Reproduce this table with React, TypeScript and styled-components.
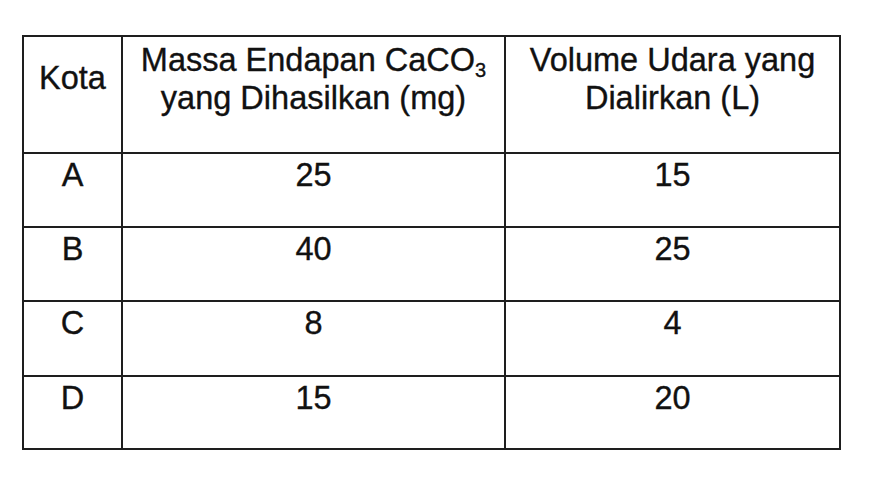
import React from "react";
import styled, { createGlobalStyle } from "styled-components";

const Global = createGlobalStyle`
  html, body { margin: 0; padding: 0; background: #ffffff; }
  body { font-family: "Liberation Sans", Arial, sans-serif; color: #111111; }
`;

const Page = styled.div`
  padding: 35px 0 0 22px;
`;

const Table = styled.table`
  border-collapse: collapse;
  table-layout: fixed;
  width: 819px;
  font-size: 32.5px;
  line-height: 38px;
  -webkit-text-stroke: 0.35px #111111;
`;

const Cell = styled.td<{ $h: number; $pad?: number }>`
  border: 2px solid #1e1e1e;
  height: ${(p) => p.$h}px;
  padding: ${(p) => p.$pad ?? 2}px 4px 0;
  vertical-align: top;
  text-align: center;
  box-sizing: border-box;
`;

const Sub = styled.sub`
  font-size: 20px;
  vertical-align: -6px;
  line-height: 0;
`;

const rows: [string, string, string, number][] = [
  ["A", "25", "15", 74],
  ["B", "40", "25", 74],
  ["C", "8", "4", 75],
  ["D", "15", "20", 73],
];

export default function App() {
  return (
    <>
      <Global />
      <Page>
        <Table>
          <colgroup>
            <col style={{ width: 99 }} />
            <col style={{ width: 383 }} />
            <col style={{ width: 335 }} />
          </colgroup>
          <tbody>
            <tr>
              <Cell $h={117} $pad={22}>Kota</Cell>
              <Cell $h={117} $pad={4}>
                Massa Endapan CaCO<Sub>3</Sub>
                <br />
                yang Dihasilkan (mg)
              </Cell>
              <Cell $h={117} $pad={4}>
                Volume Udara yang
                <br />
                Dialirkan (L)
              </Cell>
            </tr>
            {rows.map(([k, m, v, h]) => (
              <tr key={k}>
                <Cell $h={h}>{k}</Cell>
                <Cell $h={h}>{m}</Cell>
                <Cell $h={h}>{v}</Cell>
              </tr>
            ))}
          </tbody>
        </Table>
      </Page>
    </>
  );
}
